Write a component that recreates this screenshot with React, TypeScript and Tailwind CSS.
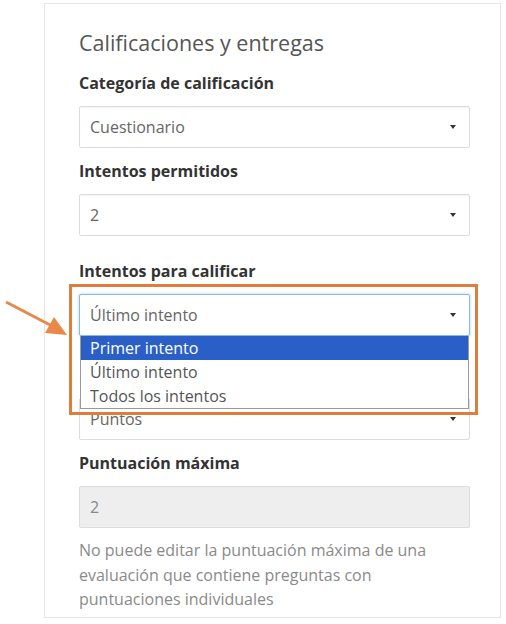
const Caret = () => (
  <span className="w-0 h-0 border-l-[3px] border-r-[3px] border-t-[4px] border-l-transparent border-r-transparent border-t-[#333]" />
)

const Select = ({ value, focused }: { value: string; focused?: boolean }) => (
  <div
    className={
      "h-[42px] w-full flex items-center justify-between pl-[10px] pr-[13px] bg-white border rounded-[2px] text-[16px] text-[#666] " +
      (focused
        ? "border-[#8fb8e0] shadow-[0_0_3px_rgba(102,175,233,0.6)]"
        : "border-[#dcdcdc] shadow-[inset_0_1px_1px_rgba(0,0,0,0.05)]")
    }
  >
    <span>{value}</span>
    <Caret />
  </div>
)

const Label = ({ text, className }: { text: string; className: string }) => (
  <div className={"text-[16px] leading-[20px] font-bold text-[#333] " + className}>{text}</div>
)

const App = () => {
  const options = ["Primer intento", "Último intento", "Todos los intentos"]

  return (
    <div className="w-[506px] h-[624px] bg-white overflow-hidden" style={{ fontFamily: '"Open Sans", "Noto Sans", sans-serif' }}>
      <div className="ml-[44px] mt-[3px] w-[457px] border border-[#e6e6e6] pl-[34px] pr-[30px] pt-[25px] pb-[5px] flex flex-col">
        <h2 className="text-[21.5px] leading-[28px] text-[#555]">Calificaciones y entregas</h2>

        <Label text="Categoría de calificación" className="mt-[16px]" />
        <div className="mt-[13px]">
          <Select value="Cuestionario" />
        </div>

        <Label text="Intentos permitidos" className="mt-[13px]" />
        <div className="mt-[13px]">
          <Select value="2" />
        </div>

        <Label text="Intentos para calificar" className="mt-[25px]" />
        <div className="mt-[13px] relative z-10">
          <Select value="Último intento" focused />

          {/* open list */}
          <div className="absolute left-[1px] right-[1px] top-full bg-white border border-[#9a9a9a] border-t-0 flex flex-col">
            {options.map((o, i) => (
              <div
                key={o}
                className={
                  "h-[24px] flex items-center pl-[9px] text-[16px] " +
                  (i === 0 ? "bg-[#2b5fc8] text-white" : "text-[#555]")
                }
              >
                {o}
              </div>
            ))}
          </div>

          {/* annotation */}
          <div className="absolute -left-[10px] -top-[10px] w-[409px] h-[131px] border-[3px] border-[#e07d3c]" />
          <svg className="absolute -left-[75px] top-[4px]" width="66" height="40" viewBox="0 0 66 40">
            <line x1="2" y1="4" x2="48" y2="28" stroke="#e8894a" strokeWidth="3" />
            <polygon points="63,37 50,19 41,35" fill="#e8894a" />
          </svg>
        </div>

        {/* label hidden under the open list */}
        <div className="mt-[29px] h-[20px]" />
        <div className="mt-[13px]">
          <Select value="Puntos" />
        </div>

        <Label text="Puntuación máxima" className="mt-[13px]" />
        <div className="mt-[13px] h-[42px] w-full flex items-center pl-[10px] bg-[#eeeeee] border border-[#dddddd] rounded-[2px] text-[16px] text-[#888]">
          2
        </div>

        <p className="mt-[10px] w-[370px] text-[16px] leading-[24.5px] text-[#8a8a8a]">
          No puede editar la puntuación máxima de una evaluación que contiene preguntas con puntuaciones individuales
        </p>
      </div>
    </div>
  )
}

export default App
